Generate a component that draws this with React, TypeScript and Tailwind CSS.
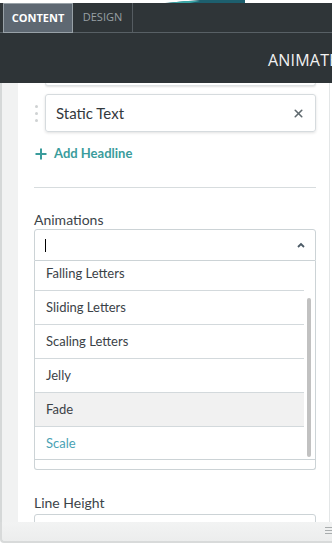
import { X } from 'lucide-react'

const items = ['Falling Letters', 'Sliding Letters', 'Scaling Letters', 'Jelly', 'Fade', 'Scale']

function DropItem({ label }: { label: string }) {
    const hover = label === 'Fade'
    const active = label === 'Scale'
    return (
        <div
            className={`h-[34px] shrink-0 flex items-center pl-[11px] border-b border-[#d3d9dc] text-[13px] ${
                hover ? 'bg-[#f1f1f1]' : 'bg-white'
            } ${active ? 'text-[#4aa2b4]' : 'text-[#3b4247]'}`}
        >
            {label}
        </div>
    )
}

export default function App() {
    return (
        <div
            className="relative w-[332px] h-[543px] overflow-hidden bg-white"
            style={{ fontFamily: 'Lato, "Open Sans", sans-serif' }}
        >
            {/* preview strip above the panel */}
            <div className="h-[3px] bg-white relative overflow-hidden">
                <svg width="332" height="3" className="absolute left-0 top-0">
                    <path d="M165 3 L200 0 L245 0 L245 3 Z" fill="#1d5f6e" />
                    <path d="M168 3 L185 1 L200 1 L190 3 Z" fill="#3aa5a5" />
                </svg>
            </div>

            {/* tabs */}
            <div
                className="h-[30px] bg-[#2f3538] flex border-b border-[#586065] pl-[3px]"
                style={{ fontFamily: '"Open Sans", sans-serif' }}
            >
                <div className="w-[70px] h-[30px] bg-[#5e6872] border border-[#98a1a7] flex items-center justify-center text-[11px] font-bold text-white">
                    CONTENT
                </div>
                <div className="w-[60px] h-[29px] border-r border-[#555c61] flex items-center justify-center text-[11px] text-[#98a0a4]">
                    DESIGN
                </div>
            </div>

            {/* header */}
            <div className="h-[50px] bg-[#2e3437] flex items-center pl-[268px] whitespace-nowrap overflow-hidden">
                <span className="text-[16px] text-[#f2f2f2] tracking-[0.2px] pt-[4px]" style={{ fontFamily: '"Open Sans", sans-serif' }}>
                    ANIMATED HEADLINE
                </span>
            </div>

            {/* body */}
            <div className="flex h-[439px]">
                <div className="w-[18px] shrink-0 bg-[#f1f2f2] border-l-2 border-[#d5d8d8]" />
                <div className="flex-1 bg-white border-r border-[#e3e6e7] mr-[2px] pl-[16px] pr-[13px] overflow-hidden">
                    {/* previous card edge */}
                    <div className="ml-[11px] h-[3px] bg-white border border-t-0 border-[#dfe3e5] rounded-b shadow-[0_1px_2px_rgba(0,0,0,0.12)]" />

                    {/* static text card */}
                    <div className="flex items-center mt-[8px]">
                        <div className="w-[11px] shrink-0 flex flex-col gap-[4px] pl-[1px]">
                            <span className="w-[3px] h-[3px] rounded-full bg-[#cfd2d3]" />
                            <span className="w-[3px] h-[3px] rounded-full bg-[#cfd2d3]" />
                            <span className="w-[3px] h-[3px] rounded-full bg-[#cfd2d3]" />
                        </div>
                        <div className="flex-1 h-[38px] border border-[#d6dbde] rounded-[3px] shadow-[0_1px_3px_rgba(0,0,0,0.12)] flex items-center pl-[10px] pr-[10px]">
                            <span className="flex-1 text-[15px] text-[#33393d]">Static Text</span>
                            <X size={13} strokeWidth={3} className="text-[#5f696e]" />
                        </div>
                    </div>

                    {/* add headline */}
                    <div className="flex items-center mt-[14px] h-[16px] pl-[1px]">
                        <svg width="12" height="12" viewBox="0 0 12 12" className="mr-[7px]">
                            <path d="M6 0.5 V11.5 M0.5 6 H11.5" stroke="#3a9c9c" strokeWidth="2" />
                        </svg>
                        <span className="text-[13px] font-bold text-[#3a9c9c]">Add Headline</span>
                    </div>

                    <div className="h-px bg-[#d7dcde] mt-[25px]" />

                    {/* animations select */}
                    <div className="mt-[23px] text-[14px] leading-[18px] text-[#3c4449]">Animations</div>
                    <div className="h-[32px] border border-[#ccd3d6] rounded-t-[3px] flex items-center pl-[10px] pr-[10px]">
                        <span className="w-px h-[13px] bg-black" />
                        <span className="flex-1" />
                        <svg width="8" height="6" viewBox="0 0 8 6">
                            <path d="M1 5 L4 2 L7 5" stroke="#4b5a66" strokeWidth="1.8" fill="none" />
                        </svg>
                    </div>
                    <div className="relative border border-t-0 border-[#ccd3d6] rounded-b-[3px] h-[209px] pb-[10px]">
                        <div className="h-[199px] overflow-hidden border-b border-[#ccd3d6] pr-[11px]">
                            <div className="-mt-[4px] flex flex-col">
                                {items.map((it) => (
                                    <DropItem key={it} label={it} />
                                ))}
                            </div>
                        </div>
                        <div className="absolute right-[4px] top-[37px] w-[4px] h-[159px] bg-[#c1c1c1] rounded-[2px]" />
                    </div>

                    {/* line height */}
                    <div className="mt-[24px] text-[14px] leading-[18px] text-[#3c4449]">Line Height</div>
                    <div className="mt-[2px] h-[32px] border border-[#ccd3d6] rounded-t-[3px]" />
                </div>
            </div>

            {/* bottom bar */}
            <div className="h-[21px] bg-gradient-to-b from-[#f2f3f3] to-[#eceded] border-l-2 border-b-2 border-[#d8dada] rounded-bl-[4px] flex items-center justify-end">
                <div className="flex flex-col gap-[2px] mb-[2px]">
                    <span className="w-[7px] h-px bg-[#a9adae]" />
                    <span className="w-[7px] h-px bg-[#a9adae]" />
                    <span className="w-[7px] h-px bg-[#a9adae]" />
                </div>
            </div>
        </div>
    )
}
